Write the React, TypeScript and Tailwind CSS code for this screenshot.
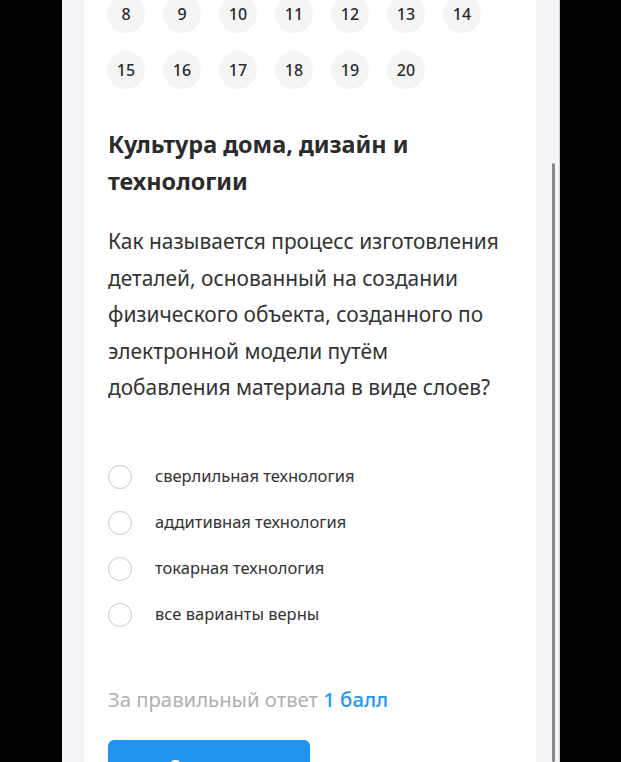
import React from 'react';

const rows = [
  [1, 2, 3, 4, 5, 6, 7],
  [8, 9, 10, 11, 12, 13, 14],
  [15, 16, 17, 18, 19, 20],
];

const options = [
  'сверлильная технология',
  'аддитивная технология',
  'токарная технология',
  'все варианты верны',
];

export default function App() {
  return (
    <div
      className="flex h-[762px] w-full overflow-hidden bg-black"
      style={{ fontFamily: '"Noto Sans", "Open Sans", sans-serif' }}
    >
      <div className="w-[62px] shrink-0 bg-black" />
      <div className="w-[22px] shrink-0 bg-[#f4f5f9]" />

      <div className="w-[452px] shrink-0 bg-white px-6">
        <div className="-mt-[61px] flex flex-col gap-[18px]">
          {rows.map((row, i) => (
            <div key={i} className="flex gap-[18px] -ml-px">
              {row.map((n) => (
                <div
                  key={n}
                  className="flex h-[38px] w-[38px] items-center justify-center rounded-full bg-[#f5f5f5] text-[16px] font-medium text-[#2b2b2b]"
                >
                  {n}
                </div>
              ))}
            </div>
          ))}
        </div>

        <h1 className="mt-[37px] text-[23.4px] font-bold leading-[37px] text-[#2b2b2b]">
          Культура дома, дизайн и технологии
        </h1>

        <p className="mt-[23px] pr-2 text-[20.9px] leading-[36.5px] text-[#333333]">
          Как называется процесс изготовления деталей, основанный на создании физического объекта, созданного по
          электронной модели путём добавления материала в виде слоев?
        </p>

        <div className="mt-[48px] flex flex-col">
          {options.map((o) => (
            <label key={o} className="flex h-[46px] items-center gap-[23px]">
              <span className="h-[24px] w-[24px] shrink-0 rounded-full border-[1.5px] border-[#c8c8c8] bg-white" />
              <span className="text-[16.5px] text-[#333333]">{o}</span>
            </label>
          ))}
        </div>

        <div className="mt-[47px] text-[20.3px] leading-[28px] text-[#b0b0b0]">
          За правильный ответ <span className="font-medium text-[#2196f3]">1 балл</span>
        </div>

        <button className="mt-[27px] h-[54px] w-[202px] rounded-[6px] bg-[#1e94f0] text-[18px] font-medium text-white">
          Ответить
        </button>
      </div>

      <div className="relative w-[24px] shrink-0 bg-[#f4f5f9]">
        <div className="absolute left-[16px] top-[163px] bottom-0 w-[3px] rounded-full bg-[#888888]" />
        <div className="absolute right-0 top-0 bottom-0 w-[1px] bg-[#d0d0d0]" />
      </div>
      <div className="flex-1 bg-black" />
    </div>
  );
}
